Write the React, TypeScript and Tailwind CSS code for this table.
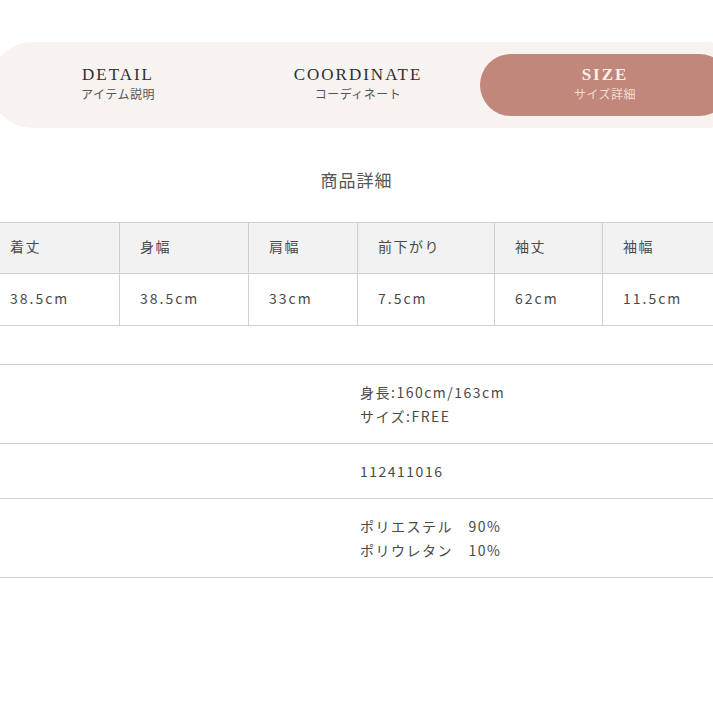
import React from "react";

const tabs = [
  { en: "DETAIL", ja: "アイテム説明", w: "w-[240px]" },
  { en: "COORDINATE", ja: "コーディネート", w: "w-[240px]" },
  { en: "SIZE", ja: "サイズ詳細", w: "w-[250px]", active: true },
];

const sizeCols = [
  { label: "着丈", value: "38.5cm", w: "w-[129px]" },
  { label: "身幅", value: "38.5cm", w: "w-[129px]" },
  { label: "肩幅", value: "33cm", w: "w-[109px]" },
  { label: "前下がり", value: "7.5cm", w: "w-[137px]" },
  { label: "袖丈", value: "62cm", w: "w-[108px]" },
  { label: "袖幅", value: "11.5cm", w: "w-[130px]" },
];

const infoRows = [
  ["身長:160cm/163cm", "サイズ:FREE"],
  ["112411016"],
  ["ポリエステル\u300090%", "ポリウレタン\u300010%"],
];

export default function App() {
  return (
    <div className="w-[713px] h-[713px] overflow-hidden bg-white font-['Noto_Sans_CJK_JP',sans-serif] text-[#4a4a4a]">
      {/* tab bar */}
      <div className="pt-[42px]">
        <div className="ml-[-10px] w-[760px] h-[86px] rounded-full bg-[#f7f3f1] flex items-center pl-[8px]">
          {tabs.map((t) => (
            <div
              key={t.en}
              className={
                t.w +
                " h-[62px] flex flex-col items-center justify-center rounded-full " +
                (t.active ? "ml-[2px] bg-[#c0877a]" : "")
              }
            >
              <div
                className={
                  "font-['Liberation_Serif',serif] text-[17px] leading-[20px] tracking-[2px] -mt-[4px] " +
                  (t.active ? "text-[#fcefe9] font-bold" : "text-[#2e2e2e]")
                }
              >
                {t.en}
              </div>
              <div
                className={
                  "text-[12px] leading-[16px] mt-[1px] tracking-[0.5px] " +
                  (t.active ? "text-[#f6dcd2]" : "text-[#555]")
                }
              >
                {t.ja}
              </div>
            </div>
          ))}
        </div>
      </div>

      {/* title */}
      <div className="mt-[40px] text-center text-[17px] leading-[24px] text-[#555] tracking-[1px]">
        商品詳細
      </div>

      {/* size table */}
      <div className="mt-[30px] ml-[-10px] flex border-t border-b border-[#cfcfcf] w-[760px]">
        {sizeCols.map((c, i) => (
          <div key={c.label} className={c.w + (i > 0 ? " border-l border-[#cfcfcf]" : "")}>
            <div className="h-[51px] bg-[#f2f2f2] border-b border-[#cfcfcf] pl-[20px] pb-[3px] flex items-center text-[14px] tracking-[1.5px]">
              {c.label}
            </div>
            <div className="h-[51px] pl-[20px] pb-[3px] flex items-center text-[14px] tracking-[2px]">
              {c.value}
            </div>
          </div>
        ))}
      </div>

      {/* info table */}
      <div className="mt-[38px] border-t border-[#cfcfcf]">
        {infoRows.map((r, i) => (
          <div key={i} className="grid grid-cols-[360px_1fr] border-b border-[#cfcfcf] py-[15px]">
            <div />
            <div className="text-[14px] leading-[24px] tracking-[1.5px] whitespace-pre">
              {r.map((line) => (
                <div key={line}>{line}</div>
              ))}
            </div>
          </div>
        ))}
      </div>
    </div>
  );
}
